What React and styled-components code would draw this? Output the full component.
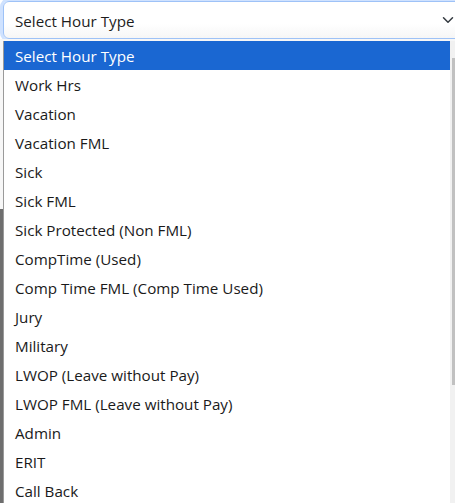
import React from 'react';
import styled, { createGlobalStyle } from 'styled-components';

const GlobalStyle = createGlobalStyle`
  html, body {
    margin: 0;
    padding: 0;
    background: #ffffff;
    overflow: hidden;
  }
  * {
    box-sizing: border-box;
  }
`;

const hourTypes = [
  'Select Hour Type',
  'Work Hrs',
  'Vacation',
  'Vacation FML',
  'Sick',
  'Sick FML',
  'Sick Protected (Non FML)',
  'CompTime (Used)',
  'Comp Time FML (Comp Time Used)',
  'Jury',
  'Military',
  'LWOP (Leave without Pay)',
  'LWOP FML (Leave without Pay)',
  'Admin',
  'ERIT',
  'Call Back'
];

const Page = styled.div`
  position: relative;
  width: 455px;
  height: 503px;
  overflow: hidden;
  font-family: 'Open Sans', 'Noto Sans', sans-serif;
  display: flex;
  flex-direction: column;
`;

// what shows behind the open list (the form under it and the modal backdrop)
const Backdrop = styled.div`
  flex: 1;
  display: flex;
  flex-direction: column;
`;

const BackdropPart = styled.div`
  height: ${(p) => p.h || 'auto'};
  flex: ${(p) => (p.h ? 'none' : 1)};
  background: ${(p) => p.color};
`;

const SelectBox = styled.div`
  flex: none;
  height: 38px;
  margin: 1px -20px 0 3px;
  padding: 0 32px 0 11px;
  display: flex;
  align-items: center;
  border: 1px solid #9ec2f7;
  border-radius: 6px;
  background: linear-gradient(#ffffff 60%, #f6f6f6);
  box-shadow: 0 0 0 3px rgba(13, 110, 253, 0.2);
  color: #1d1d1d;
  font-size: 15.2px;
`;

const SelectText = styled.span`
  flex: 1;
  padding-top: 1px;
`;

const Chevron = styled.svg`
  width: 12px;
  height: 12px;
  margin-right: -12px;
`;

const Menu = styled.div`
  position: absolute;
  top: 41px;
  left: 3px;
  width: 460px;
  bottom: 0;
  display: flex;
  background: #ffffff;
  border-left: 1px solid #9a9a9a;
`;

const List = styled.ul`
  flex: none;
  width: 446px;
  margin: 0;
  padding: 0;
  list-style: none;
`;

const Option = styled.li`
  height: 29px;
  padding: 0 0 0 11px;
  display: flex;
  align-items: center;
  font-size: 15.2px;
  color: ${(p) => (p.active ? '#ffffff' : '#1a1a1a')};
  background: ${(p) => (p.active ? '#1a67d2' : 'transparent')};
  white-space: nowrap;
`;

const Scrollbar = styled.div`
  flex: none;
  width: 10px;
  background: #f1f1f1;
  padding: 17px 0 0 2px;
`;

const Thumb = styled.div`
  width: 6px;
  height: 327px;
  background: #c1c1c1;
`;

export default function App() {
  return (
    <>
      <GlobalStyle />
      <Page>
        <SelectBox>
          <SelectText>Select Hour Type</SelectText>
          <Chevron viewBox="0 0 16 16">
            <path d="M2 5l6 6 6-6" fill="none" stroke="#343a40" strokeWidth="2" strokeLinecap="round" strokeLinejoin="round" />
          </Chevron>
        </SelectBox>
        <Backdrop>
          <BackdropPart h="170px" color="#f7f7f7" />
          <BackdropPart color="#6e6e6e" />
        </Backdrop>
        <Menu>
          <List>
            {hourTypes.map((t, i) => (
              <Option key={t} active={i === 0}>
                {t}
              </Option>
            ))}
          </List>
          <Scrollbar>
            <Thumb />
          </Scrollbar>
        </Menu>
      </Page>
    </>
  );
}
